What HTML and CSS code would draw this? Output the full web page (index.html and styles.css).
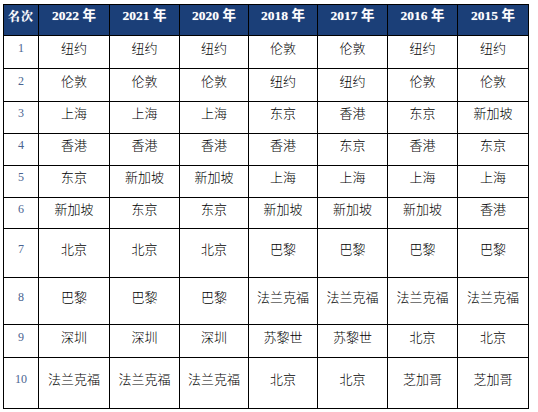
FILE: index.html
```html
<!DOCTYPE html>
<html lang="zh-CN">
<head>
<meta charset="utf-8">
<link rel="stylesheet" href="styles.css">
</head>
<body>
<table class="rank">
<colgroup>
<col class="c-rank"><col class="c-a"><col class="c-b"><col class="c-c"><col class="c-c"><col class="c-b"><col class="c-b"><col class="c-a">
</colgroup>
<thead>
<tr class="r-head"><th class="th-rank">名次</th><th>2022 年</th><th>2021 年</th><th>2020 年</th><th>2018 年</th><th>2017 年</th><th>2016 年</th><th>2015 年</th></tr>
</thead>
<tbody>
<tr class="r33"><td class="num">1</td><td>纽约</td><td>纽约</td><td>纽约</td><td>伦敦</td><td>伦敦</td><td>纽约</td><td>纽约</td></tr>
<tr class="r33"><td class="num">2</td><td>伦敦</td><td>伦敦</td><td>伦敦</td><td>纽约</td><td>纽约</td><td>伦敦</td><td>伦敦</td></tr>
<tr class="r32"><td class="num">3</td><td>上海</td><td>上海</td><td>上海</td><td>东京</td><td>香港</td><td>东京</td><td>新加坡</td></tr>
<tr class="r32"><td class="num">4</td><td>香港</td><td>香港</td><td>香港</td><td>香港</td><td>东京</td><td>香港</td><td>东京</td></tr>
<tr class="r32"><td class="num">5</td><td>东京</td><td>新加坡</td><td>新加坡</td><td>上海</td><td>上海</td><td>上海</td><td>上海</td></tr>
<tr class="r31"><td class="num">6</td><td>新加坡</td><td>东京</td><td>东京</td><td>新加坡</td><td>新加坡</td><td>新加坡</td><td>香港</td></tr>
<tr class="r49"><td class="num">7</td><td>北京</td><td>北京</td><td>北京</td><td>巴黎</td><td>巴黎</td><td>巴黎</td><td>巴黎</td></tr>
<tr class="r47"><td class="num">8</td><td>巴黎</td><td>巴黎</td><td>巴黎</td><td>法兰克福</td><td>法兰克福</td><td>法兰克福</td><td>法兰克福</td></tr>
<tr class="r33"><td class="num">9</td><td>深圳</td><td>深圳</td><td>深圳</td><td>苏黎世</td><td>苏黎世</td><td>北京</td><td>北京</td></tr>
<tr class="r51"><td class="num">10</td><td>法兰克福</td><td>法兰克福</td><td>法兰克福</td><td>北京</td><td>北京</td><td>芝加哥</td><td>芝加哥</td></tr>
</tbody>
</table>
</body>
</html>
```
FILE: styles.css
```css
html, body {
  margin: 0;
  padding: 0;
  background: #ffffff;
}
body {
  padding: 4px 0 0 3px;
}
.rank {
  border-collapse: collapse;
  table-layout: fixed;
  width: 525px;
  font-family: "Noto Sans CJK SC", "Noto Sans", sans-serif;
  font-weight: 300;
  font-size: 13px;
  color: #000;
}
.c-rank { width: 35px; }
.c-a { width: 71px; }
.c-b { width: 70px; }
.c-c { width: 69px; }
.rank th, .rank td {
  border: 1px solid #000;
  text-align: center;
  vertical-align: middle;
  padding: 0 0 9px 0;
  line-height: 16px;
  white-space: nowrap;
  overflow: hidden;
}
.rank th {
  background: #1b3f78;
  color: #fff;
  font-family: "Liberation Serif", "Noto Sans CJK SC", serif;
  font-weight: bold;
  font-size: 13.5px;
  padding-bottom: 8px;
  text-shadow: 0 0 1px rgba(255,255,255,0.4);
}
.rank th.th-rank {
  font-family: "Noto Serif CJK SC", "Noto Sans CJK SC", serif;
  font-size: 12px;
  letter-spacing: 1px;
}
.r-head { height: 31px; }
.r31 { height: 31px; }
.r32 { height: 32px; }
.r33 { height: 33px; }
.r47 { height: 47px; }
.r49 { height: 49px; }
.r51 { height: 51px; }
.rank td.num {
  font-family: "Liberation Serif", serif;
  font-weight: normal;
  font-size: 12px;
  color: #4a6490;
}
```
